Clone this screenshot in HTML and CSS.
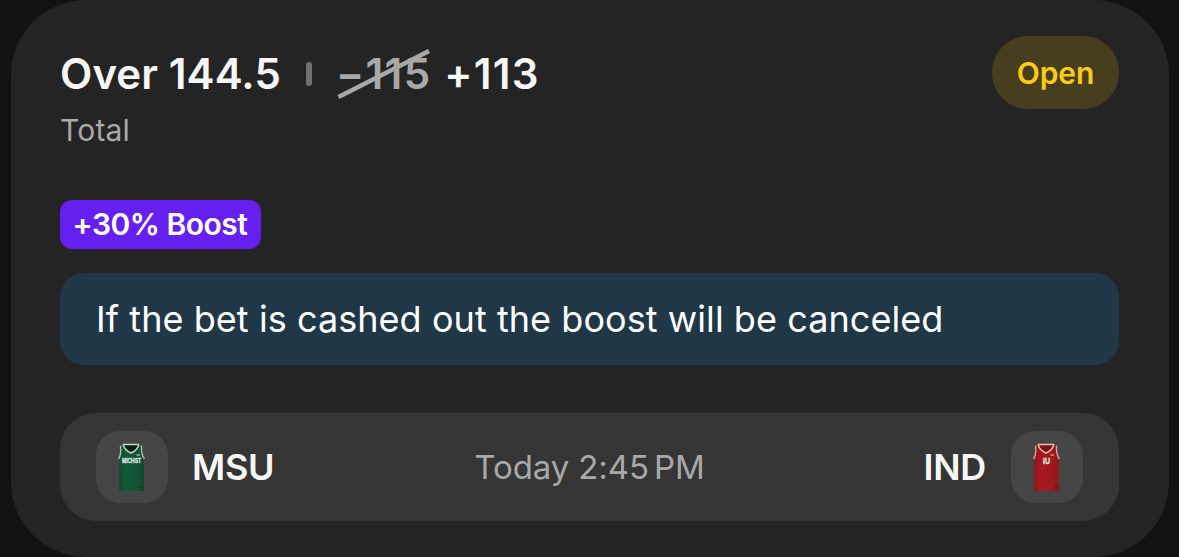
FILE: index.html
```
<!DOCTYPE html>
<html lang="en">
<head>
<meta charset="utf-8">
<title>Bet details</title>
<link rel="stylesheet" href="styles.css">
</head>
<body>
<main class="card">
  <header class="head">
    <div class="headline">
      <span class="pick">Over 144.5</span>
      <span class="divider"></span>
      <span class="old-odds">−115<svg class="strike" width="94" height="52" viewBox="0 0 94 52"><path d="M1.5 49L92 3" stroke="#a8a8a8" stroke-width="4.5"/></svg></span>
      <span class="new-odds">+113</span>
    </div>
    <span class="status"><span class="status-text">Open</span></span>
  </header>
  <div class="market">Total</div>
  <div class="boost"><span class="boost-text">+30% Boost</span></div>
  <div class="notice"><span class="notice-text">If the bet is cashed out the boost will be canceled</span></div>
  <section class="game">
    <div class="team">
      <span class="kit">
        <svg class="jersey" width="30" height="50" viewBox="0 0 30 50">
          <defs><linearGradient id="green"><stop offset="0" stop-color="#174a30"/><stop offset=".3" stop-color="#125a37"/><stop offset=".75" stop-color="#115433"/><stop offset="1" stop-color="#17432e"/></linearGradient></defs>
          <path d="M6 2.500H21L22 6L14 10L6 6Z" fill="#0b1c14"/>
          <path d="M3.500 3.500L6.500 2.500Q9 8 14 10.500Q19 8 21 2.500L24.500 3.500Q24.500 13 27 17V49H2V17Q4 13 3.500 3.500Z" fill="url(#green)"/>
          <path d="M6 2.500Q8 9 14 11Q20 9 22 2.500M6 2.500H22" fill="none" stroke="#c7d3c8" stroke-width="1.400"/>
          <path d="M3.500 3.500Q4.500 13 1.500 17M24.500 3.500Q24 13 27.500 17" fill="none" stroke="#aebdaf" stroke-width="1.400"/>
          <path d="M19.500 13H23" stroke="#b8cbbd" stroke-width="1.200"/>
          <text class="kit-text" x="5" y="20.900" textLength="19" lengthAdjust="spacingAndGlyphs">MICHST</text>
          <path d="M22.500 45.500H26" stroke="#0c3521"/>
          <path d="M4.500 30Q3.500 38 4 48M25 30L26 40" stroke="#0e4429" fill="none" opacity=".6"/>
        </svg>
      </span>
      <span class="code">MSU</span>
    </div>
    <span class="time">Today 2:45<span class="meridiem">PM</span></span>
    <div class="team team-home">
      <span class="code">IND</span>
      <span class="kit">
        <svg class="jersey" width="30" height="50" viewBox="0 0 30 50">
          <defs><linearGradient id="red"><stop offset="0" stop-color="#93171b"/><stop offset=".3" stop-color="#a8191d"/><stop offset=".75" stop-color="#a0181c"/><stop offset="1" stop-color="#8b181b"/></linearGradient></defs>
          <path d="M6 2.500H21L22 6L14 10L6 6Z" fill="#7c1013"/>
          <path d="M3.500 3.500L6.500 2.500Q9 8 14 10.500Q19 8 21 2.500L24.500 3.500Q24.500 13 27 17V49H2V17Q4 13 3.500 3.500Z" fill="url(#red)"/>
          <path d="M6 2.500Q8 9 14 11Q20 9 22 2.500M6 2.500H22" fill="none" stroke="#e2bdbb" stroke-width="1.400"/>
          <path d="M3.500 3.500Q4.500 13 1.500 17M24.500 3.500Q24 13 27.500 17" fill="none" stroke="#d3a09f" stroke-width="1.400"/>
          <path d="M18.500 13H22" stroke="#e0b2b0" stroke-width="1.200"/>
          <text class="kit-text kit-text-home" x="11" y="22" textLength="7" lengthAdjust="spacingAndGlyphs">IU</text>
          <path d="M22.500 45.500H26" stroke="#4f2020" stroke-width="1.500"/>
        </svg>
      </span>
    </div>
  </section>
</main>
</body>
</html>
```
FILE: styles.css
```
* { box-sizing: border-box; }
body {
  margin: 0;
  height: 557px;
  overflow: hidden;
  background: #121212;
  font-family: Inter, "Liberation Sans", sans-serif;
  color: #f6f6f6;
  white-space: nowrap;
}
.card {
  width: 1158px;
  height: 557px;
  margin-left: 10.5px;
  padding: 36px 49.500px;
  border-radius: 75px;
  background: #242424;
}
.head { display: flex; justify-content: space-between; height: 73px; }
.headline { display: flex; align-items: center; height: 75px; font-size: 42px; font-weight: 600; }
.pick { letter-spacing: .1px; }
.divider { width: 6px; height: 24px; margin: 1px 24px 0 25px; border-radius: 3px; background: #707070; }
.old-odds { position: relative; color: #a8a8a8; letter-spacing: 1.300px; }
.strike { position: absolute; left: 1.5px; top: -.5px; }
.new-odds { margin-left: 13px; letter-spacing: 1.200px; }
.status {
  display: flex;
  align-items: center;
  justify-content: center;
  width: 127px;
  height: 73px;
  border-radius: 36px;
  background: #463e1e;
  color: #facc15;
  font-size: 30px;
  font-weight: 600;
}
.status-text { letter-spacing: -.1px; }
.market { margin-top: 3px; height: 36px; line-height: 36px; font-size: 30px; letter-spacing: .2px; color: #a8a8a8; }
.boost {
  display: flex;
  align-items: center;
  justify-content: center;
  width: 201px;
  height: 49px;
  margin-top: 52px;
  padding: 0 1px 2px 0;
  border-radius: 12px;
  background: #651fef;
  color: #fff;
  font-size: 30px;
  font-weight: 600;
  letter-spacing: -.5px;
}
.notice {
  display: flex;
  align-items: center;
  height: 92px;
  margin-top: 24px;
  padding-left: 36px;
  border-radius: 24px;
  background: #203747;
  color: #fff;
  font-size: 36px;
  letter-spacing: .06px;
}
.game {
  display: grid;
  grid-template-columns: 1fr auto 1fr;
  align-items: center;
  height: 108px;
  margin-top: 48px;
  padding: 0 36px;
  border-radius: 36px;
  background: #353535;
}
.team { display: flex; align-items: center; gap: 24px; }
.team-home { justify-content: flex-end; }
.kit {
  display: flex;
  align-items: center;
  justify-content: center;
  width: 72px;
  height: 72px;
  border-radius: 24px;
  background: #454545;
}
.jersey { overflow: visible; }
.kit-text { font: 700 7.500px "Liberation Sans", sans-serif; fill: #e3e9e3; stroke: #e3e9e3; stroke-width: .3px; }
.kit-text-home { font-size: 9.500px; }
.code { font-size: 36px; font-weight: 600; letter-spacing: -.3px; }
.team-home .code { margin-right: 1px; }
.time { font-size: 33px; letter-spacing: -.1px; color: #a8a8a8; }
.meridiem { margin-left: 5px; }
```
